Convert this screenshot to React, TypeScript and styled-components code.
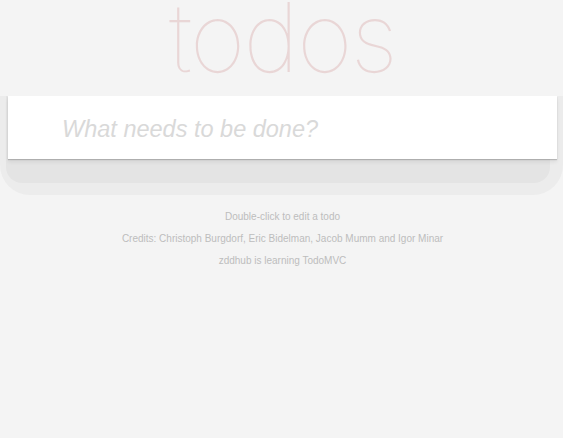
import React from "react";
import styled, { createGlobalStyle } from "styled-components";

const GlobalStyle = createGlobalStyle`
  html, body {
    margin: 0;
    padding: 0;
    background: #f4f4f4;
  }
  body {
    font-family: "Liberation Sans", Arial, sans-serif;
    -webkit-font-smoothing: antialiased;
  }
`;

const Page = styled.main`
  margin: 0 6px 0 8px;
  display: flex;
  flex-direction: column;
`;

const Header = styled.header`
  height: 96px;
`;

const Title = styled.h1`
  margin: 0;
  font-family: "Inter", "Liberation Sans", sans-serif;
  font-weight: 100;
  font-size: 96px;
  line-height: 74px;
  text-align: center;
  color: rgba(175, 47, 47, 0.15);
  letter-spacing: -2px;
`;

const Stack = styled.section`
  position: relative;
  isolation: isolate;

  &::before {
    content: "";
    position: absolute;
    left: -8px;
    right: -6px;
    top: 0;
    bottom: -36px;
    background: #ececec;
    border-radius: 0 0 30px 30px;
    z-index: 0;
  }

  &::after {
    content: "";
    position: absolute;
    left: -2px;
    right: 7px;
    top: 0;
    bottom: -24px;
    background: #e4e4e4;
    border-radius: 0 0 16px 16px;
    z-index: 0;
  }
`;

const Card = styled.div`
  position: relative;
  z-index: 1;
  background: #fff;
  height: 63px;
  box-shadow: 0 1px 1px rgba(0, 0, 0, 0.18), 0 3px 4px rgba(0, 0, 0, 0.07);
  display: flex;
  align-items: center;
`;

const NewTodo = styled.input`
  flex: 1;
  border: none;
  outline: none;
  background: transparent;
  margin: 0;
  padding: 3px 16px 0 54px;
  height: 60px;
  font-family: "Liberation Sans", Arial, sans-serif;
  font-size: 23.5px;
  color: #4d4d4d;

  &::placeholder {
    font-style: italic;
    color: #d9d9d9;
  }
`;

const Info = styled.footer`
  margin-top: 47px;
  text-align: center;
  color: #bdbdbd;
  font-size: 10px;
`;

const InfoLine = styled.p`
  margin: 0;
  line-height: 22px;
`;

export default function App() {
  return (
    <>
      <GlobalStyle />
      <Page>
        <Header>
          <Title>todos</Title>
        </Header>
        <Stack>
          <Card>
            <NewTodo placeholder="What needs to be done?" />
          </Card>
        </Stack>
        <Info>
          <InfoLine>Double-click to edit a todo</InfoLine>
          <InfoLine>Credits: Christoph Burgdorf, Eric Bidelman, Jacob Mumm and Igor Minar</InfoLine>
          <InfoLine>zddhub is learning TodoMVC</InfoLine>
        </Info>
      </Page>
    </>
  );
}
